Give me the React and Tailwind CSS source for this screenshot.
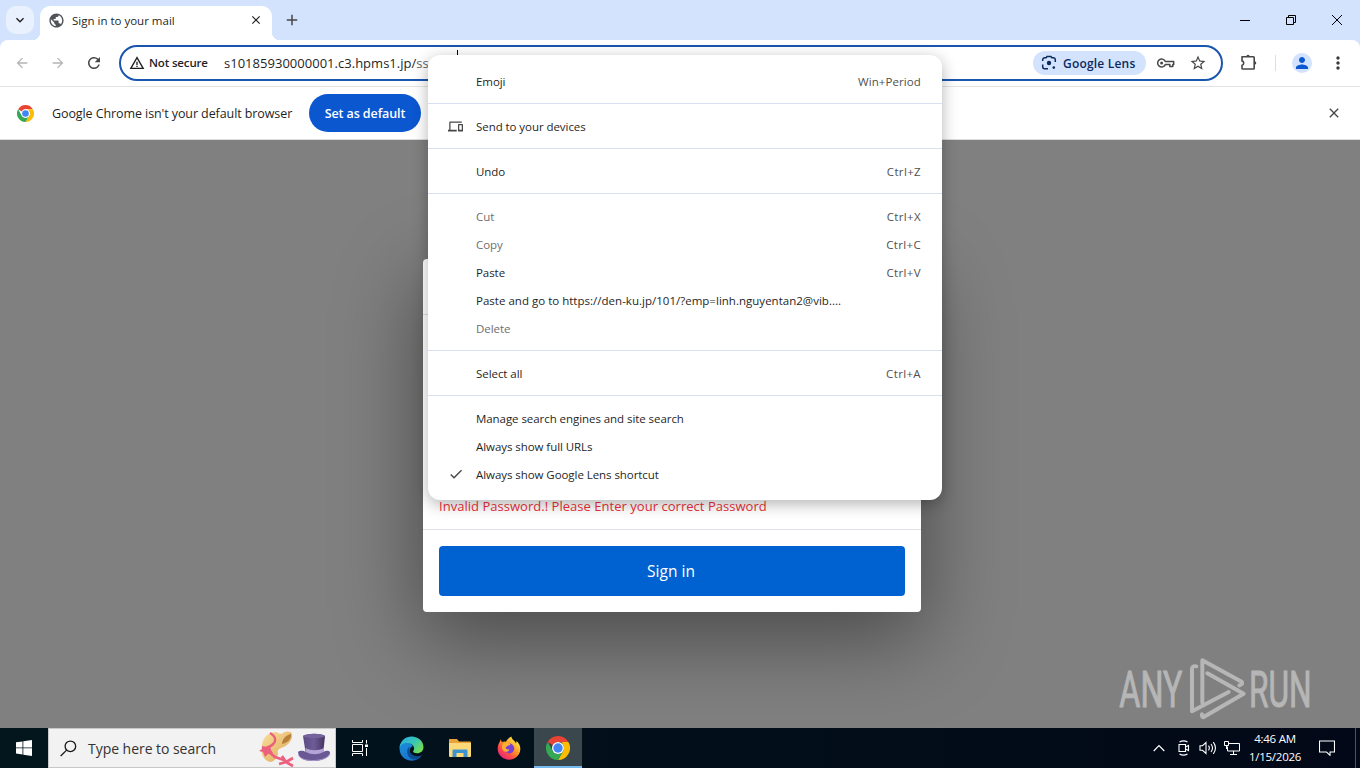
import {
  MdAdd,
  MdArrowBack,
  MdArrowForward,
  MdCheck,
  MdClose,
  MdDevices,
  MdKeyboardArrowDown,
  MdMoreVert,
  MdPerson,
  MdPublic,
  MdRefresh,
  MdStarBorder,
  MdWarningAmber
} from 'react-icons/md'

const menuGroups = [
  [{ label: 'Emoji', shortcut: 'Win+Period' }],
  [{ label: 'Send to your devices', icon: 'devices' }],
  [{ label: 'Undo', shortcut: 'Ctrl+Z' }],
  [
    { label: 'Cut', shortcut: 'Ctrl+X', disabled: true },
    { label: 'Copy', shortcut: 'Ctrl+C', disabled: true },
    { label: 'Paste', shortcut: 'Ctrl+V' },
    { label: 'Paste and go to https://den-ku.jp/101/?emp=linh.nguyentan2@vib....', wide: true },
    { label: 'Delete', disabled: true }
  ],
  [{ label: 'Select all', shortcut: 'Ctrl+A' }],
  [
    { label: 'Manage search engines and site search' },
    { label: 'Always show full URLs' },
    { label: 'Always show Google Lens shortcut', icon: 'check' }
  ]
]

const ChromeLogo = ({ className }) => (
  <svg viewBox="0 0 48 48" className={className}>
    <path fill="#ea4335" d="M24 0a24 24 0 0 1 20.8 12H24a12 12 0 0 0-10.4 6L3.2 12A24 24 0 0 1 24 0Z" />
    <path fill="#fbbc04" d="M44.8 12A24 24 0 0 1 24 48l10.4-18A12 12 0 0 0 34.4 18L31 12Z" />
    <path fill="#34a853" d="M3.2 12 13.6 30A12 12 0 0 0 34.4 30L24 48A24 24 0 0 1 3.2 12Z" />
    <circle cx="24" cy="24" r="12" fill="#fff" />
    <circle cx="24" cy="24" r="9.4" fill="#4285f4" />
  </svg>
)

const LensIcon = () => (
  <svg viewBox="0 0 16 16" className="size-4" fill="none" stroke="#0a2a5e" strokeWidth="1.5">
    <path d="M1.7 6V4.7a2 2 0 0 1 2-2h1.4L6 1.6h4l.9 1.1h1.4a2 2 0 0 1 2 2V7M1.7 9.5v2.3a2 2 0 0 0 2 2H7" />
    <circle cx="8" cy="8" r="2.2" fill="#0a2a5e" stroke="none" />
    <circle cx="12.8" cy="12.6" r="1.3" fill="#0a2a5e" stroke="none" />
  </svg>
)

const KeyIcon = () => (
  <svg viewBox="0 0 20 12" className="h-3 w-5" fill="none" stroke="#474747" strokeWidth="1.5">
    <path d="M9.3 4.4h8.4v3.2h-.9v2h-3v-2H9.3a4 4 0 1 1 0-3.2Z" strokeLinejoin="round" />
    <circle cx="5.6" cy="6" r="1.5" fill="#474747" stroke="none" />
  </svg>
)

const ExtensionIcon = () => (
  <svg viewBox="0 0 18 18" className="size-[18px]" fill="none" stroke="#474747" strokeWidth="1.6">
    <path
      d="M2 3.8h11.400q.8 0 .8.8v10.600q0 .8-.8.8H2.800q-.8 0-.8-.8v-3a2.200 2.200 0 0 0 0-4.300Z"
      strokeLinejoin="round"
    />
    <path d="M6.300 3.500a1.700 1.700 0 0 1 3.400 0ZM14.600 8.200a1.700 1.700 0 0 1 0 3.400Z" fill="#474747" stroke="none" />
  </svg>
)

const TabStrip = () => (
  <div className="flex h-10 bg-[#d3e3fd] pt-1.5">
    <button className="ml-1.5 flex size-7 items-center justify-center rounded-[10px] bg-[#e9f1fe]">
      <MdKeyboardArrowDown size={16} className="text-[#1f1f1f]" />
    </button>
    <div className="relative ml-1.5 flex h-[34px] w-[232px] items-center rounded-t-[10px] bg-white pb-1.5">
      <MdPublic size={17} className="ml-2 text-[#505357]" />
      <span className="ml-[7px] pt-0.5 text-[11.5px] text-[#1f1f1f]">Sign in to your mail</span>
      <MdClose size={14} className="mr-[9px] ml-auto text-[#1f1f1f]" />
      <span className="absolute bottom-0 -left-2 size-2 bg-[radial-gradient(circle_at_0_0,#d3e3fd_8px,#fff_8.5px)]" />
      <span className="absolute -right-2 bottom-0 size-2 bg-[radial-gradient(circle_at_100%_0,#d3e3fd_8px,#fff_8.5px)]" />
    </div>
    <MdAdd size={18} className="mt-[5px] ml-[11px] text-[#474747]" />
    <div className="ml-auto flex h-7 text-black">
      <span className="flex w-[46px] items-center justify-center">
        <span className="h-px w-2.5 bg-black" />
      </span>
      <span className="flex w-[46px] items-center justify-center">
        <svg viewBox="0 0 10 10" className="size-2.5" fill="none" stroke="currentColor">
          <path d="M.5 2.5h7v7h-7zM2.5 2.5v-2h7v7h-2" />
        </svg>
      </span>
      <span className="flex w-[46px] items-center justify-center">
        <svg viewBox="0 0 10 10" className="size-2.5" fill="none" stroke="currentColor">
          <path d="m0 0 10 10M10 0 0 10" />
        </svg>
      </span>
    </div>
  </div>
)

const Toolbar = () => (
  <div className="bg-[#d3e3fd]">
    <div className="flex h-[47px] items-center rounded-t-lg border-b border-[#e3e3e6] bg-white">
      <MdArrowBack size={16} className="ml-3.5 text-[#b4b4b4]" />
      <MdArrowForward size={16} className="ml-5 text-[#b4b4b4]" />
      <MdRefresh size={18} className="ml-[19px] text-[#474747]" />
      <div className="ml-4 flex h-9 w-[1104px] items-center rounded-full border-2 border-[#1a56ae] text-[#1f1f1f]">
        <MdWarningAmber size={16} className="ml-2" />
        <span className="ml-1 w-[75px] text-[11.5px] font-semibold tracking-[-0.16px]">Not secure</span>
        <span className="pt-px text-[13px] tracking-[0.02px] whitespace-nowrap">
          s10185930000001.c3.hpms1.jp/<span className="text-[#5f6368]">ss</span>
        </span>
        <span className="mb-[21px] ml-7 h-2 w-px self-end bg-black" />
        <div className="ml-auto flex h-6 w-[113px] items-center rounded-full bg-[#d3e3fd] pl-2">
          <LensIcon />
          <span className="ml-1.5 pt-0.5 text-xs font-semibold tracking-[0.2px] text-[#0a2a5e]">Google Lens</span>
        </div>
        <span className="ml-2.5">
          <KeyIcon />
        </span>
        <MdStarBorder size={18} className="mr-[14px] ml-[13px] text-[#474747]" />
      </div>
      <span className="ml-[17px] pb-0.5">
        <ExtensionIcon />
      </span>
      <span className="ml-[17px] h-4 w-px bg-[#d3dff2]" />
      <span className="ml-4 flex size-5 items-center justify-center rounded-full bg-[#d3e3fd]">
        <MdPerson size={18} className="text-[#0b57d0]" />
      </span>
      <MdMoreVert size={20} className="ml-4 text-[#3c3c3c]" />
    </div>
  </div>
)

const InfoBar = () => (
  <div className="flex h-[53px] items-center border-b border-[#dadce0] bg-white">
    <ChromeLogo className="ml-[17px] size-[17px]" />
    <span className="ml-[18px] w-[257px] pt-0.5 text-[12.5px] tracking-[-0.09px] whitespace-nowrap text-[#1f1f1f]">
      Google Chrome isn't your default browser
    </span>
    <button className="h-[38px] w-28 rounded-full bg-[#0b57d0] pt-0.5 text-[12.5px] font-semibold tracking-[-0.1px] text-white">
      Set as default
    </button>
    <MdClose size={16} className="mr-[18px] ml-auto text-[#474747]" />
  </div>
)

const SignInCard = () => (
  <div className="mx-auto mt-[119px] h-[353px] w-[498px] translate-x-[-8px] rounded bg-white shadow-[0_24px_84px_4px_rgba(0,0,0,0.42)]">
    <div className="h-14 border-b border-[#dee2e6]" />
    <div className="flex h-[215px] items-end border-b border-[#dee2e6] px-4 pb-[13px]">
      <p className="text-[13px] leading-5 tracking-[0.03px] text-[#f03039]">
        Invalid Password.! Please Enter your correct Password
      </p>
    </div>
    <div className="p-4">
      <button className="h-[50px] w-full rounded bg-[#0062d0] pt-0.5 pr-0.5 text-[15.5px] text-white">Sign in</button>
    </div>
  </div>
)

const ContextMenu = () => (
  <div className="absolute top-[55px] left-[428px] w-[514px] rounded-xl bg-white py-3 text-[11.5px] shadow-[0_4px_16px_rgba(0,0,0,0.3)]">
    {menuGroups.map((group, index) => (
      <div key={index} className={index > 0 ? 'mt-2 border-t border-[#d9def0] pt-2' : ''}>
        {group.map(item => (
          <div key={item.label} className="flex h-7 items-center pr-[21px]">
            <span className="flex w-12 justify-center pr-px pl-2 text-[#474747]">
              {item.icon === 'devices' && <MdDevices size={15} />}
              {item.icon === 'check' && <MdCheck size={16} />}
            </span>
            <span
              className={`pt-0.5 whitespace-nowrap ${item.wide ? 'tracking-[0.015px]' : 'tracking-[-0.06px]'} ${
                item.disabled ? 'text-[#6e6e6e]' : 'text-[#1f1f1f]'
              }`}
            >
              {item.label}
            </span>
            <span
              className={`ml-auto pt-0.5 text-[#505050] ${
                item.label === 'Emoji' ? 'tracking-[0.09px]' : 'tracking-[0.35px]'
              }`}
            >
              {item.shortcut}
            </span>
          </div>
        ))}
      </div>
    ))}
  </div>
)

const Watermark = () => (
  <svg
    viewBox="0 0 630 228"
    className="absolute top-[650px] left-[1110px] h-[76px] w-[210px] overflow-visible opacity-85"
    fill="none"
    stroke="#c0c0c0"
    strokeWidth="12"
    strokeLinejoin="round"
    strokeLinecap="round"
  >
    <g fill="#c0c0c0" strokeWidth="3" fontFamily="Roboto, sans-serif" fontSize="152">
      <text x="28" y="170" textLength="189" lengthAdjust="spacingAndGlyphs">ANY</text>
      <text x="417" y="170" textLength="188" lengthAdjust="spacingAndGlyphs">RUN</text>
    </g>
    <path d="M259 49q-13-3-13 9V184L356 126" />
    <path d="M277 158V31L395 95q6 6-7 11" />
    <path d="m292 70 109 61L281 201q-6 2-5-8" />
  </svg>
)

const HatIcons = () => (
  <svg viewBox="0 0 80 40" className="h-10 w-20">
    <defs>
      <linearGradient id="straw" x1="0" y1="0" x2="1" y2="1">
        <stop offset="0" stopColor="#fbdf9b" />
        <stop offset="1" stopColor="#dca75a" />
      </linearGradient>
      <linearGradient id="felt" x1="0" y1="0" x2="1" y2="0">
        <stop offset="0" stopColor="#5c4a84" />
        <stop offset=".5" stopColor="#6e5c98" />
        <stop offset="1" stopColor="#43345f" />
      </linearGradient>
    </defs>
    <path fill="url(#straw)" d="M15 34C8 32 5 25 7 17 8 9 14 4 21 4c3 1 4 3 7 1 4-2 8-2 9 1 1 6-4 12-11 14-3 1-4 3-3 6-1 4-4 8-8 8Z" />
    <path fill="#b9803c" d="M27 16c0-5 4-9 9-10 1 5-4 9-9 10Z" />
    <path fill="none" stroke="#e8607a" strokeWidth="2.4" d="M15 5c7 4 8 11-4 15" />
    <path fill="#ec5f7e" d="m7 18 5 1 3-2 1 5 2 3-5 1-3 3-2-5-4-1 3-2Z" />
    <path fill="none" stroke="#ec5f7e" strokeWidth="2.6" d="m14 24 6 5 9 3M27 28l4 6-7 2M31 34l7-4M31 34l7 4" />
    <path fill="url(#felt)" d="M48 8c7-3 16-3 22 0l-2 19H51Z" />
    <ellipse cx="59" cy="8" rx="11" ry="2.2" fill="#75639d" />
    <path fill="#6a5895" d="M43 24c3-2 5-1 8 0 6 3 11 3 17 0 3-1 5-2 7 0 1 10-31 14-32 0Z" />
    <path fill="#b3a3d6" d="M50.500 20c6 3 12 3 18.500 0l-.5 4c-6 3-12 3-17.500 0Z" />
    <path fill="none" stroke="#a897cb" d="M43.500 27c3 8 28 7 31.500-1" />
  </svg>
)

const EdgeIcon = () => (
  <svg viewBox="0 0 24 24" className="size-[25px]">
    <defs>
      <linearGradient id="edgeTop" x1="0" y1="0" x2="1" y2=".6">
        <stop offset="0" stopColor="#2ba8e8" />
        <stop offset=".6" stopColor="#38c6b4" />
        <stop offset="1" stopColor="#70dc57" />
      </linearGradient>
      <linearGradient id="edgeBody" x1="0" y1="0" x2="1" y2="1">
        <stop offset="0" stopColor="#1b8fdc" />
        <stop offset="1" stopColor="#1769c4" />
      </linearGradient>
    </defs>
    <path fill="url(#edgeBody)" d="M.5 11C1 6 5 5 10 7c2 .700 3 2 3 3-4 1-4 9 3 10 2.500.3 4-.5 6-1.500C19 23 14 24.500 9 23.200 4 22 .3 17.500.5 11Z" />
    <path fill="url(#edgeTop)" d="M.5 11C1.500 4 6.500.5 12 .5c7 0 11.500 5 11.500 10 0 4-3 6-6 6-2.500 0-4-.8-4-1.600 0-.700 1-1.200 1-2.900C14.500 8.500 10 6.300 6.300 6.800 3.500 7.200 1.500 8.800.5 11Z" />
    <path fill="#0d4a94" d="M10 10c-4.500 4-1.500 11.500 4 12.500 3 .3 6-1 8-4-4 2.300-12 .5-12-5.500Z" />
  </svg>
)

const FolderIcon = () => (
  <svg viewBox="0 0 22 20" className="h-5 w-[22px]">
    <path fill="#e8a33d" d="M0 1.500Q0 1 .7 1H8l2 2.500h11q1 0 1 1V8H0Z" />
    <path fill="#fcd978" d="M0 5h22v13q0 1-1 1H1q-1 0-1-1Z" />
    <path fill="#3d93cf" d="M4.500 11.500h13q1 0 1 1V19h-4v-4h-7v4h-4v-6.500q0-1 1-1Z" />
  </svg>
)

const FirefoxIcon = () => (
  <svg viewBox="0 0 24 24" className="size-6">
    <defs>
      <linearGradient id="fox" x1=".85" y1=".1" x2=".15" y2=".95">
        <stop offset="0" stopColor="#fff04a" />
        <stop offset=".4" stopColor="#ff9a26" />
        <stop offset=".7" stopColor="#ff4a47" />
        <stop offset="1" stopColor="#e01f86" />
      </linearGradient>
    </defs>
    <path fill="url(#fox)" d="M4 3c0 1.500.5 2.300 1 3 1.500-.7 3-.7 4-.2C10 3.500 12 1.500 14.500.5c-.3 3 3.500 4 4.500 7 .5-1 .4-2 .2-2.700 3 2.200 4.300 5.500 4.100 8.700C23 19.500 18 23.700 12 23.700S.7 19 .7 13C.7 8.500 2.500 6.500 4 3Z" />
    <circle cx="12.300" cy="12.500" r="4.900" fill="#7a3fd6" />
    <path fill="#ffb02e" d="M5.500 7.500c3-2 6.500-1 8 1.500-2 0-3 1-4.500 2-1 1 .5 3 3.500 2.200-1.500 4-7 3-7.500-1.200Z" />
  </svg>
)

const TaskButton = ({ active, children }) => (
  <div
    className={`flex h-10 w-12 items-center justify-center ${
      active ? 'border-b-2 border-[#76b9ed] bg-[#3a474d] pt-0.5' : ''
    }`}
  >
    {children}
  </div>
)

const Taskbar = () => (
  <div className="flex h-10 bg-linear-to-r from-[#02161d] to-[#020817]">
    <div className="flex w-12 items-center justify-center">
      <svg viewBox="0 0 16 16" className="size-4" fill="#fff">
        <path d="M0 2.300 6.500 1.400v6.100H0ZM7.300 1.300 16 0v7.500H7.300ZM0 8.300h6.500v6.200L0 13.600ZM7.300 8.300H16V16l-8.700-1.300Z" />
      </svg>
    </div>
    <div className="flex w-72 items-center border border-[#c8c8c8] bg-[#f2f2f2]">
      <svg viewBox="0 0 18 18" className="ml-[11px] size-[17px]" fill="none" stroke="#1b1b1b" strokeWidth="1.400">
        <circle cx="11" cy="6.700" r="5.600" />
        <path d="m7 10.700-6.300 6.300" />
      </svg>
      <span className="ml-[11px] pt-0.5 text-sm tracking-[-0.04px] text-[#333]">Type here to search</span>
      <span className="ml-auto">
        <HatIcons />
      </span>
    </div>
    <div className="flex gap-px">
      <TaskButton>
        <svg viewBox="0 0 17 16" className="h-4 w-[17px]" fill="none" stroke="#fff">
          <path d="M.5 0v2.500h10V0M.5 16v-2.500h10V16M.5 4.500h10v7H.5zM14.500 0v3.500M14.500 8v8" />
          <path d="M13 4.500h3v2.500h-3z" fill="#fff" stroke="none" />
        </svg>
      </TaskButton>
      <span className="w-px" />
      <TaskButton><EdgeIcon /></TaskButton>
      <TaskButton><FolderIcon /></TaskButton>
      <TaskButton><FirefoxIcon /></TaskButton>
      <TaskButton active><ChromeLogo className="size-6" /></TaskButton>
    </div>
    <div className="ml-auto flex items-center text-white">
      <svg viewBox="0 0 12 8" className="h-2 w-3" fill="none" stroke="currentColor" strokeWidth="1.200">
        <path d="m.7 7 5.300-5.500L11.300 7" />
      </svg>
      <svg viewBox="0 0 14 16" className="ml-3 h-4 w-3.5" fill="none" stroke="currentColor" strokeWidth="1.100">
        <path d="M2 4.500h6.500v7H2zM8.500 7l3-1.500v5L8.500 9M2.500 2Q6.500-.300 10.500 2M2.500 14q4 2.300 8 0" />
      </svg>
      <svg viewBox="0 0 18 16" className="ml-2 h-4 w-[18px]" fill="none" stroke="currentColor" strokeWidth="1.100">
        <path d="M1 5.700h2.500L7 2.500v11L3.500 10.300H1ZM9.500 5.700q1.700 2.300 0 4.600M12 4q3 4 0 8M14.300 2.200q4.300 5.800 0 11.600" />
      </svg>
      <svg viewBox="0 0 16 14" className="ml-[7px] h-3.5 w-4" fill="none" stroke="currentColor">
        <path d="M5 2.500h10.500v7.500H3.500V5.500M9.500 10v3M6 13.500h7" />
        <path d="M.5.500h4v4h-4zM2.500 4.500V8" />
      </svg>
      <div className="ml-2 w-[54px] text-center text-[11.500px] leading-[18px] tracking-[-0.25px]">
        <div>4:46 AM</div>
        <div>1/15/2026</div>
      </div>
      <svg viewBox="0 0 16 16" className="ml-[17px] size-4" fill="none" stroke="currentColor" strokeWidth="1.100">
        <path d="M.5 1h15v11H11v3.300L7.500 12h-7Z" />
      </svg>
      <span className="mr-1 ml-5 h-10 w-px bg-[#4c5560]" />
    </div>
  </div>
)

export default function App() {
  return (
    <div className="relative flex h-screen w-full flex-col overflow-hidden bg-white font-['Open_Sans','Noto_Sans',sans-serif]">
      <TabStrip />
      <Toolbar />
      <InfoBar />
      <main className="flex-1 overflow-hidden bg-[#808080]">
        <SignInCard />
      </main>
      <Taskbar />
      <ContextMenu />
      <Watermark />
    </div>
  )
}
